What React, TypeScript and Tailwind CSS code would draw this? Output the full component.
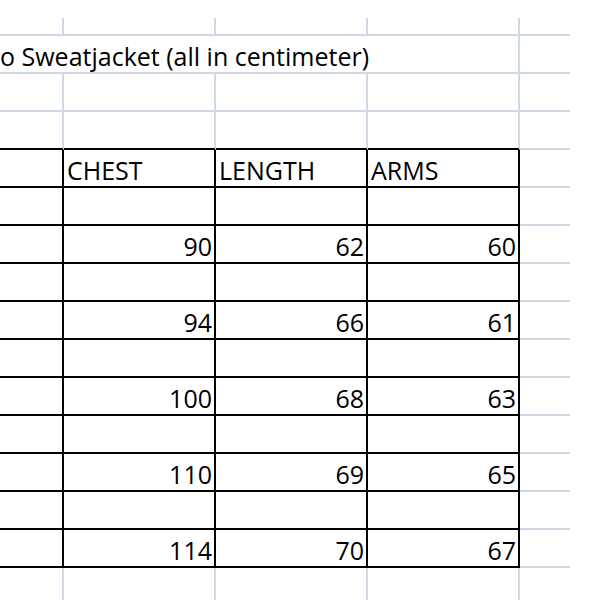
import React from 'react'

const GRID = 'border-[#d0d7e5]'

type Row = {
  kind: 'top' | 'title' | 'plain' | 'above' | 'table' | 'after'
  cells?: string[]
}

const rows: Row[] = [
  { kind: 'top' },
  { kind: 'plain' },
  { kind: 'title' },
  { kind: 'plain' },
  { kind: 'above' },
  { kind: 'table', cells: ['', 'CHEST', 'LENGTH', 'ARMS'] },
  { kind: 'table', cells: ['', '', '', ''] },
  { kind: 'table', cells: ['', '90', '62', '60'] },
  { kind: 'table', cells: ['', '', '', ''] },
  { kind: 'table', cells: ['', '94', '66', '61'] },
  { kind: 'table', cells: ['', '', '', ''] },
  { kind: 'table', cells: ['', '100', '68', '63'] },
  { kind: 'table', cells: ['', '', '', ''] },
  { kind: 'table', cells: ['', '110', '69', '65'] },
  { kind: 'table', cells: ['', '', '', ''] },
  { kind: 'table', cells: ['', '114', '70', '67'] },
  { kind: 'after' },
]

const widths = ['w-[64px]', 'w-[152px]', 'w-[152px]', 'w-[152px]']

const SheetRow: React.FC<{ row: Row; index: number }> = ({ row, index }) => {
  if (row.kind === 'top') return <div className="h-[18px]" />

  if (row.kind === 'title') {
    return (
      <div className="flex h-[38px]">
        <div className={`w-[520px] flex items-end pb-[3px] border-r-2 border-b-2 ${GRID}`}>
          <span className="whitespace-nowrap text-[25px] leading-none text-black">
            o Sweatjacket (all in centimeter)
          </span>
        </div>
        <div className={`w-[50px] border-b-2 ${GRID}`} />
      </div>
    )
  }

  if (row.kind === 'table') {
    return (
      <div className="flex h-[38px]">
        {row.cells!.map((text, i) => {
          const isNumber = /^\d+$/.test(text)
          return (
            <div
              key={i}
              className={`${widths[i]} flex items-end pb-[3px] border-r-2 border-b-2 border-black ${
                isNumber ? 'justify-end pr-[2px]' : 'pl-[3px]'
              }`}
            >
              <span className="text-[25px] leading-none text-black">{text}</span>
            </div>
          )
        })}
        <div className={`w-[50px] border-b-2 ${GRID}`} />
      </div>
    )
  }

  const h = index === 1 ? 'h-[18px]' : row.kind === 'after' ? 'h-[32px]' : 'h-[38px]'
  const bottom =
    row.kind === 'after' ? '' : row.kind === 'above' ? 'border-b-2 border-b-black' : 'border-b-2'

  return (
    <div className={`flex ${h}`}>
      {widths.map((w, i) => (
        <div key={i} className={`${w} border-r-2 ${GRID} ${bottom}`} />
      ))}
      {row.kind !== 'after' && <div className={`w-[50px] border-b-2 ${GRID}`} />}
    </div>
  )
}

export default function App() {
  return (
    <div
      className="w-[600px] h-[600px] overflow-hidden bg-white"
      style={{ fontFamily: '"Open Sans", Lato, sans-serif' }}
    >
      {rows.map((row, i) => (
        <SheetRow key={i} row={row} index={i} />
      ))}
    </div>
  )
}
